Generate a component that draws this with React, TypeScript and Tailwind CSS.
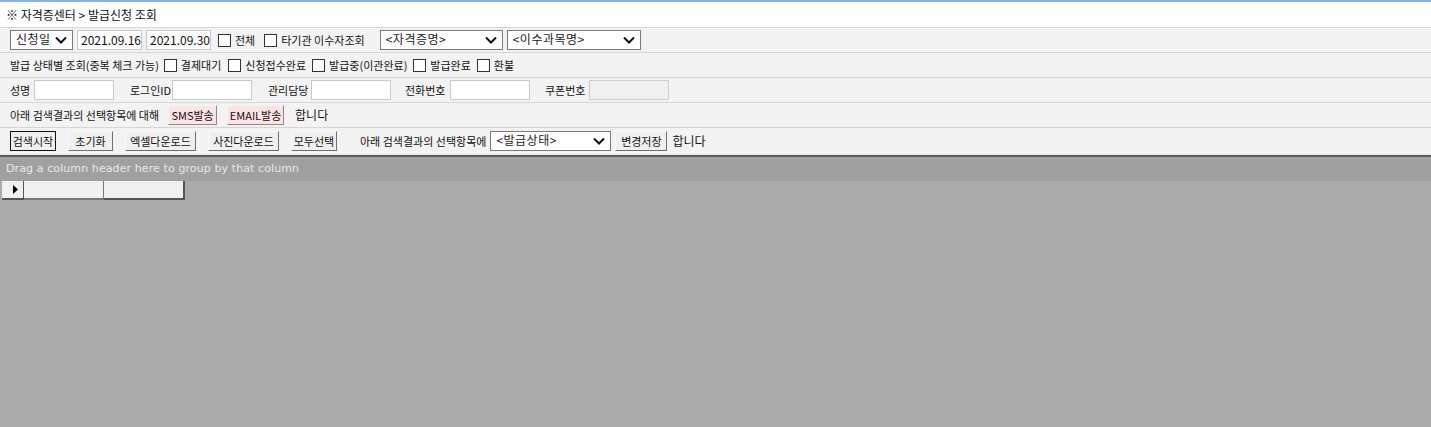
import React from "react";

const font = { fontFamily: '"Noto Sans CJK KR", "Noto Sans", sans-serif' };

function Chevron() {
  return (
    <svg width="12" height="8" viewBox="0 0 12 8" className="shrink-0">
      <path d="M1 1.5 L6 6.5 L11 1.5" fill="none" stroke="#111" strokeWidth="2" />
    </svg>
  );
}

function Select({ label, w }: { label: string; w: string }) {
  return (
    <div className={`${w} h-[20px] bg-white border border-[#7a7a7a] flex items-center justify-between pl-[5px] pr-[5px] text-[12px] leading-none text-[#222]`}>
      <span className="-mt-[2px] tracking-[0.5px]">{label}</span>
      <Chevron />
    </div>
  );
}

function Box({ w, disabled }: { w: string; disabled?: boolean }) {
  return (
    <div className={`${w} h-[20px] border ${disabled ? "bg-[#f0f0f0] border-[#cfcfcf]" : "bg-white border-[#c8c8c8]"}`} />
  );
}

function Check({ label }: { label: string }) {
  return (
    <div className="flex items-center gap-[4px]">
      <div className="w-[13px] h-[13px] bg-white border border-[#333]" />
      <span>{label}</span>
    </div>
  );
}

function Btn({ label, w, pink, focus }: { label: string; w: string; pink?: boolean; focus?: boolean }) {
  const base = pink
    ? "bg-[#fde3e3] border-t-[#f5f5f5] border-l-[#f5f5f5] border-r-[#8a8a8a] border-b-[#8a8a8a]"
    : focus
    ? "bg-[#f0f0f0] border-[#111]"
    : "bg-[#f0f0f0] border-t-[#fafafa] border-l-[#fafafa] border-r-[#6e6e6e] border-b-[#6e6e6e]";
  return (
    <div className={`${w} h-[20px] flex items-center justify-center border ${base} text-[11px] leading-none whitespace-nowrap`}>
      {label}
    </div>
  );
}

function Row({ children, className = "" }: { children: React.ReactNode; className?: string }) {
  return (
    <div className={`h-[25px] flex items-center px-[10px] bg-[#f3f3f3] border-b border-[#d6d6d6] text-[11px] text-[#111] ${className}`}>
      {children}
    </div>
  );
}

export default function App() {
  return (
    <div className="w-[1431px] h-[427px] overflow-hidden bg-[#ababab] flex flex-col" style={font}>
      <div className="h-[2px] bg-[#8ab4e0]" />
      <div className="h-[26px] flex items-center px-[6px] bg-white border-b border-[#d6d6d6] text-[12px] text-[#111]">
        ※ 자격증센터 &gt; 발급신청 조회
      </div>

      <Row>
        <Select label="신청일" w="w-[63px]" />
        <div className="ml-[4px] w-[65px] h-[20px] bg-white border border-[#c8c8c8] flex items-center pl-[3px] text-[12px]">2021.09.16</div>
        <div className="ml-[4px] w-[65px] h-[20px] bg-white border border-[#c8c8c8] flex items-center pl-[3px] text-[12px]">2021.09.30</div>
        <div className="ml-[7px]"><Check label="전체" /></div>
        <div className="ml-[9px]"><Check label="타기관 이수자조회" /></div>
        <div className="ml-[15px]"><Select label="<자격증명>" w="w-[123px]" /></div>
        <div className="ml-[4px]"><Select label="<이수과목명>" w="w-[134px]" /></div>
      </Row>

      <Row>
        <span>발급 상태별 조회(중복 체크 가능)</span>
        <div className="ml-[5px]"><Check label="결제대기" /></div>
        <div className="ml-[7px]"><Check label="신청접수완료" /></div>
        <div className="ml-[6px]"><Check label="발급중(이관완료)" /></div>
        <div className="ml-[6px]"><Check label="발급완료" /></div>
        <div className="ml-[6px]"><Check label="환불" /></div>
      </Row>

      <Row className="h-[24px]">
        <span className="w-[24px]">성명</span>
        <Box w="w-[80px]" />
        <span className="ml-[16px] w-[42px]">로그인ID</span>
        <Box w="w-[80px]" />
        <span className="ml-[16px] w-[43px]">관리담당</span>
        <Box w="w-[80px]" />
        <span className="ml-[14px] w-[45px]">전화번호</span>
        <Box w="w-[80px]" />
        <span className="ml-[15px] w-[44px]">쿠폰번호</span>
        <Box w="w-[80px]" disabled />
      </Row>

      <Row>
        <span>아래 검색결과의 선택항목에 대해</span>
        <div className="ml-[9px]"><Btn label="SMS발송" w="w-[49px]" pink /></div>
        <div className="ml-[10px]"><Btn label="EMAIL발송" w="w-[57px]" pink /></div>
        <span className="ml-[11px] text-[12px]">합니다</span>
      </Row>

      <Row className="h-[26px] border-b-0">
        <Btn label="검색시작" w="w-[46px]" focus />
        <div className="ml-[12px]"><Btn label="초기화" w="w-[45px]" /></div>
        <div className="ml-[12px]"><Btn label="엑셀다운로드" w="w-[71px]" /></div>
        <div className="ml-[12px]"><Btn label="사진다운로드" w="w-[71px]" /></div>
        <div className="ml-[12px]"><Btn label="모두선택" w="w-[46px]" /></div>
        <span className="ml-[23px]">아래 검색결과의 선택항목에</span>
        <div className="ml-[4px]"><Select label="<발급상태>" w="w-[121px]" /></div>
        <div className="ml-[4px]"><Btn label="변경저장" w="w-[52px]" /></div>
        <span className="ml-[5px] text-[12px]">합니다</span>
      </Row>

      <div className="h-[1px] bg-[#e8e8e8]" />
      <div className="h-[2px] bg-[#5a5a5a]" />
      <div className="h-[24px] bg-[#a0a0a0] flex items-center px-[6px] text-[11px] tracking-[0.1px] text-[#e8e8e8]" style={{ fontFamily: '"DejaVu Sans", sans-serif' }}>
        Drag a column header here to group by that column
      </div>
      <div className="flex h-[19px] ml-[2px]">
        <div className="w-[22px] bg-[#f0f0f0] border-r border-b-2 border-[#555] flex items-center pl-[11px]">
          <svg width="5" height="9" viewBox="0 0 5 9"><path d="M0 0 L5 4.5 L0 9 Z" fill="#000" /></svg>
        </div>
        <div className="w-[80px] bg-[#f0f0f0] border-r border-b-2 border-[#777]" />
        <div className="w-[81px] bg-[#f0f0f0] border-r-2 border-b-2 border-[#555]" />
      </div>
      <div className="flex-1" />
    </div>
  );
}
